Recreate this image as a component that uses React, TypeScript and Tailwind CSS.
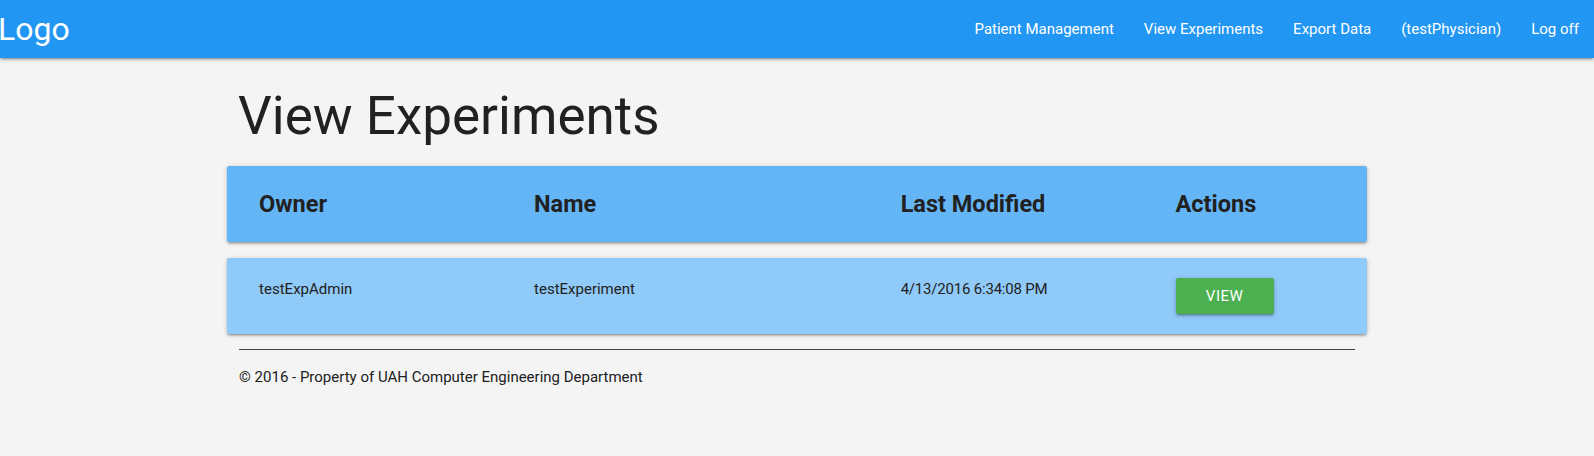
import React from "react";

const navLinks = ["Patient Management", "View Experiments", "Export Data", "(testPhysician)", "Log off"];

const experiments = [
  {
    id: 1,
    owner: "testExpAdmin",
    name: "testExperiment",
    modified: "4/13/2016 6:34:08 PM",
  },
];

const depth =
  "shadow-[0_2px_2px_0_rgba(0,0,0,0.14),0_3px_1px_-2px_rgba(0,0,0,0.12),0_1px_5px_0_rgba(0,0,0,0.2)]";

const App = () => {
  return (
    <div className="min-h-screen bg-[#f4f4f4] font-['Roboto',sans-serif] text-[#212121]">
      <nav className={`flex h-[58px] items-center justify-between bg-[#2196f3] ${depth}`}>
        <a className="-ml-[2px] text-[32px] leading-[58px] text-white">Logo</a>
        <ul className="flex h-full">
          {navLinks.map((link) => (
            <li key={link}>
              <a className="block px-[15px] text-[15px] leading-[58px] text-white">{link}</a>
            </li>
          ))}
        </ul>
      </nav>
      <main className="mx-auto w-[70%]">
        <h2 className="mt-[28px] mb-[20px] -ml-[1px] text-[53px] leading-[60px] font-normal">View Experiments</h2>
        <div className="-mx-3">
          <div className={`grid grid-cols-12 rounded-[2px] bg-[#64b5f6] p-5 ${depth}`}>
            <div className="col-span-3 px-3 text-[23.5px] leading-[36px] font-bold">Owner</div>
            <div className="col-span-4 px-3 text-[23.5px] leading-[36px] font-bold">Name</div>
            <div className="col-span-3 px-3 text-[23.5px] leading-[36px] font-bold">Last Modified</div>
            <div className="col-span-2 px-3 text-[23.5px] leading-[36px] font-bold">Actions</div>
          </div>
          {experiments.map((exp) => (
            <div
              key={exp.id}
              className={`mt-4 grid grid-cols-12 rounded-[2px] bg-[#90caf9] p-5 text-[15px] leading-[22.5px] ${depth}`}
            >
              <div className="col-span-3 px-3">{exp.owner}</div>
              <div className="col-span-4 px-3">{exp.name}</div>
              <div className="col-span-3 px-3 tracking-[-0.2px]">{exp.modified}</div>
              <div className="col-span-2 px-3">
                <button
                  className={`h-[36px] w-[98px] rounded-[2px] bg-[#4caf50] text-[15px] tracking-[0.5px] text-white uppercase ${depth}`}
                >
                  View
                </button>
              </div>
            </div>
          ))}
        </div>
        <hr className="mt-[15px] border-t border-[#444]" />
        <p className="mt-4 text-[15px] leading-[22.5px]">© 2016 - Property of UAH Computer Engineering Department</p>
      </main>
    </div>
  );
};

export default App;
